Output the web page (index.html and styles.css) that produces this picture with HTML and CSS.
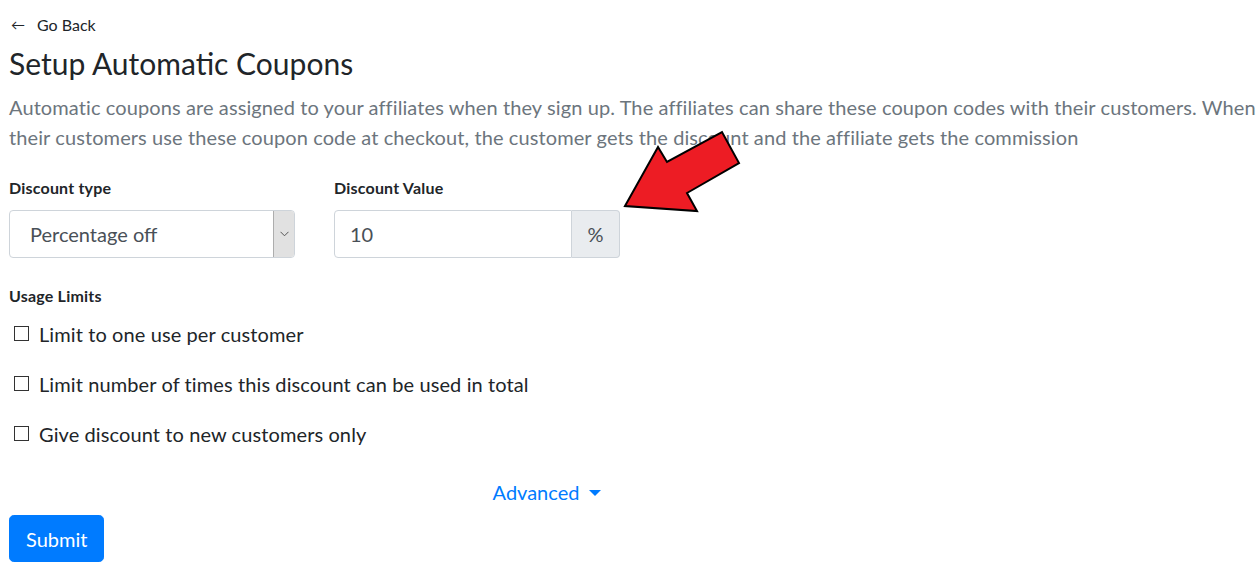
FILE: index.html
```html
<!DOCTYPE html>
<html lang="en">
<head>
<meta charset="utf-8">
<title>Setup Automatic Coupons</title>
<link rel="stylesheet" href="styles.css">
</head>
<body>
<div class="page">
  <a class="back" href="#"><span class="back-arrow">&#8592;</span><span>Go Back</span></a>
  <h1 class="title">Setup Automatic Coupons</h1>
  <p class="lead">Automatic coupons are assigned to your affiliates when they sign up. The affiliates can share these coupon codes with their customers. When their customers use these coupon code at checkout, the customer gets the discount and the affiliate gets the commission</p>

  <div class="fields">
    <div class="field">
      <label class="field-label">Discount type</label>
      <div class="select">
        <span class="select-value">Percentage off</span>
        <span class="select-btn">
          <svg width="9" height="6" viewBox="0 0 9 6"><path d="M0.5 0.8 L4.5 4.8 L8.5 0.8" fill="none" stroke="#555" stroke-width="1"/></svg>
        </span>
      </div>
    </div>
    <div class="field">
      <label class="field-label">Discount Value</label>
      <div class="input-group">
        <span class="input-value">10</span>
        <span class="input-append">%</span>
      </div>
    </div>
  </div>

  <div class="usage">
    <div class="field-label">Usage Limits</div>
    <label class="check"><span class="box"></span><span>Limit to one use per customer</span></label>
    <label class="check"><span class="box"></span><span>Limit number of times this discount can be used in total</span></label>
    <label class="check"><span class="box"></span><span>Give discount to new customers only</span></label>
  </div>

  <div class="advanced-row"><a class="advanced" href="#">Advanced<span class="caret"></span></a></div>

  <button class="submit" type="button">Submit</button>

  <svg class="annotation" width="140" height="100" viewBox="615 125 140 100">
    <polygon points="625,206 658,147 667,162 722,132 739,163 687,193 697,211" fill="#ed1c24" stroke="#000" stroke-width="2" stroke-linejoin="miter"/>
  </svg>
</div>
</body>
</html>
```

FILE: styles.css
```css
* { box-sizing: border-box; }
html, body { margin: 0; padding: 0; background: #fff; }
body {
  font-family: "Segoe UI", Lato, "Noto Sans", "Liberation Sans", sans-serif;
  color: #212529;
}
.page {
  position: relative;
  width: 1260px;
  height: 570px;
  padding: 13px 9px 0 9px;
  display: flex;
  flex-direction: column;
  align-items: flex-start;
}
.back {
  display: flex;
  align-items: center;
  gap: 12px;
  font-size: 16px;
  line-height: 24px;
  color: #212529;
  text-decoration: none;
  padding-left: 2px;
}
.back-arrow { font-size: 14px; }
.title {
  margin: 6px 0 0 0;
  font-size: 30px;
  line-height: 40px;
  font-weight: 400;
}
.lead {
  margin: 9px 0 0 0;
  font-size: 20px;
  line-height: 30px;
  font-weight: 400;
  letter-spacing: 0.1px;
  color: #6c757d;
  width: 1251px;
}
.fields {
  margin-top: 25px;
  display: grid;
  grid-template-columns: 286px 286px;
  column-gap: 39px;
}
.field { display: flex; flex-direction: column; gap: 11px; }
.field-label {
  font-size: 16px;
  line-height: 22px;
  font-weight: 700;
  letter-spacing: 0.2px;
  color: #212529;
}
.select {
  height: 48px;
  border: 1px solid #ced4da;
  border-radius: 4px;
  display: flex;
  align-items: stretch;
  overflow: hidden;
}
.select-value {
  flex: 1;
  display: flex;
  align-items: center;
  padding-left: 20px;
  font-size: 20px;
  color: #495057;
}
.select-btn {
  width: 21px;
  background: #e1e1e1;
  border-left: 1px solid #adadad;
  display: flex;
  align-items: center;
  justify-content: center;
}
.input-group {
  height: 48px;
  display: flex;
}
.input-value {
  flex: 1;
  border: 1px solid #ced4da;
  border-radius: 4px 0 0 4px;
  display: flex;
  align-items: center;
  padding-left: 15px;
  font-size: 20px;
  color: #495057;
}
.input-append {
  width: 48px;
  border: 1px solid #ced4da;
  border-left: none;
  border-radius: 0 4px 4px 0;
  background: #e9ecef;
  display: flex;
  align-items: center;
  justify-content: center;
  font-size: 20px;
  color: #495057;
}
.usage {
  margin-top: 27px;
  display: flex;
  flex-direction: column;
  gap: 20px;
}
.usage .field-label { margin-bottom: -8px; }
.check {
  display: flex;
  align-items: center;
  gap: 10px;
  font-size: 20px;
  line-height: 30px;
  letter-spacing: 0.1px;
  padding-left: 5px;
}
.box {
  width: 15px;
  height: 15px;
  border: 1.5px solid #333;
  background: #fff;
  margin-top: -2px;
}
.advanced-row {
  margin-top: 28px;
  width: 1076px;
  text-align: center;
}
.advanced {
  font-size: 20px;
  line-height: 30px;
  color: #007bff;
  text-decoration: none;
  display: inline-flex;
  align-items: center;
}
.caret {
  display: inline-block;
  margin-left: 10px;
  width: 0;
  height: 0;
  border-left: 6px solid transparent;
  border-right: 6px solid transparent;
  border-top: 6px solid #007bff;
  margin-top: 2px;
}
.submit {
  margin-top: 8px;
  height: 47px;
  padding: 0 16px;
  background: #007bff;
  border: 1px solid #007bff;
  border-radius: 4.8px;
  color: #fff;
  font-family: inherit;
  font-size: 20px;
}
.annotation {
  position: absolute;
  left: 615px;
  top: 125px;
}
```
